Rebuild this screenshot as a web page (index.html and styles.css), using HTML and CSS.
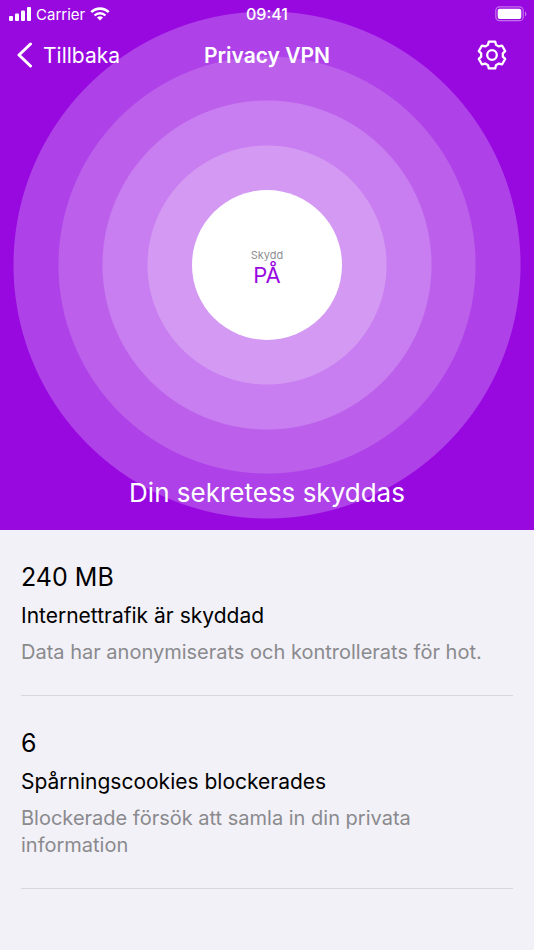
FILE: index.html
```html
<!DOCTYPE html>
<html lang="sv">
<head>
<meta charset="utf-8">
<meta name="viewport" content="width=device-width, initial-scale=1">
<title>Privacy VPN</title>
<link rel="stylesheet" href="styles.css">
</head>
<body>
<main class="screen">
  <section class="hero">
    <div class="status-bar">
      <div class="status-network">
        <svg width="22" height="14" viewBox="0 0 22 14" fill="#fff" aria-hidden="true">
          <rect x="0" y="9" width="4" height="5" rx="1"/>
          <rect x="6" y="6.500" width="4" height="7.500" rx="1"/>
          <rect x="12" y="3.500" width="4" height="10.500" rx="1"/>
          <rect x="18" y="0" width="4" height="14" rx="1"/>
        </svg>
        <span>Carrier</span>
        <svg width="20" height="14" viewBox="0 0 20 14" fill="none" stroke="#fff" aria-hidden="true">
          <path d="M1.300 5.100a12.600 12.600 0 0 1 17.400 0" stroke-width="2.600"/>
          <path d="M4.500 8.500a8 8 0 0 1 11 0" stroke-width="2.400"/>
          <path d="M10 13.600 6.900 10.600a4.600 4.600 0 0 1 6.200 0Z" fill="#fff" stroke="none"/>
        </svg>
      </div>
      <time class="status-time">09:41</time>
      <svg class="battery" width="32" height="16" viewBox="0 0 32 16" fill="none" aria-hidden="true">
        <rect x=".8" y=".8" width="27.400" height="13.900" rx="3.800" stroke="#fff" stroke-opacity=".42" stroke-width="1.200"/>
        <rect x="2.700" y="2.700" width="23.600" height="10.200" rx="2" fill="#fff"/>
        <path d="M30 5.400c1.800.7 1.800 4.100 0 4.800Z" fill="#fff" fill-opacity=".45"/>
      </svg>
    </div>
    <header class="nav">
      <a class="back" href="#">
        <svg width="16" height="26" viewBox="0 0 16 26" fill="none" stroke="#fff" stroke-width="3" stroke-linecap="round" stroke-linejoin="round" aria-hidden="true">
          <path d="M13.500 2 2 13 13.500 24"/>
        </svg>
        <span>Tillbaka</span>
      </a>
      <h1 class="nav-title">Privacy VPN</h1>
      <button class="settings" type="button" aria-label="Inställningar">
        <svg width="30" height="30" viewBox="-15 -15 30 30" fill="none" stroke="#fff" stroke-width="2.300" stroke-linejoin="round" aria-hidden="true">
          <path d="M-4-10.200-3.200-13.400H3.200L4-10.200 6.830-8.560 10-9.450 13.200-3.900 10.830-1.640V1.640L13.200 3.900 10 9.450 6.830 8.560 4 10.200 3.200 13.400H-3.200L-4 10.200-6.830 8.560-10 9.450-13.200 3.900-10.830 1.640V-1.640L-13.200-3.900-10-9.450-6.830-8.560Z"/>
          <circle r="4.800"/>
        </svg>
      </button>
    </header>
    <button class="shield" type="button">
      <span class="shield-label">Skydd</span>
      <span class="shield-state">PÅ</span>
    </button>
    <p class="headline">Din sekretess skyddas</p>
  </section>
  <section class="stats">
    <article class="stat">
      <p class="stat-value">240 MB</p>
      <h2 class="stat-title">Internettrafik är skyddad</h2>
      <p class="stat-text">Data har anonymiserats och kontrollerats för hot.</p>
    </article>
    <article class="stat">
      <p class="stat-value">6</p>
      <h2 class="stat-title">Spårningscookies blockerades</h2>
      <p class="stat-text">Blockerade försök att samla in din privata information</p>
    </article>
  </section>
</main>
</body>
</html>
```
FILE: styles.css
```css
* {
  box-sizing: border-box;
}

body {
  margin: 0;
  background: #f2f1f7;
  color: #000;
  font-family: Inter, "Liberation Sans", sans-serif;
}

h1, h2, p {
  margin: 0;
}

button {
  border: 0;
  padding: 0;
  background: none;
  font: inherit;
}

svg {
  display: block;
}

/* Concentric rings share their centre with the shield button. */
.hero {
  display: flex;
  flex-direction: column;
  align-items: center;
  background: radial-gradient(
    circle at 50% 265px,
    #d49af3 119px,
    #c87df0 120px 164px,
    #bc60ec 165px 208px,
    #ae41e8 209px 253px,
    #9809e0 254px
  );
  color: #fff;
}

.status-bar,
.nav {
  display: grid;
  grid-template-columns: 1fr auto 1fr;
  align-items: center;
  width: 100%;
}

.status-bar {
  height: 28px;
  padding: 0 7px;
  font-size: 15px;
}

.status-network {
  display: flex;
  align-items: center;
  gap: 5px;
  padding-left: 2px;
}

.status-time {
  font-size: 16px;
  font-weight: 500;
}

.battery {
  justify-self: end;
}

.nav {
  height: 54px;
  padding: 0 17px;
  font-size: 21px;
}

.back {
  display: flex;
  align-items: center;
  gap: 10px;
  color: #fff;
  text-decoration: none;
}

.nav-title {
  font-size: 21px;
  font-weight: 600;
}

.settings {
  justify-self: end;
  padding-right: 10px;
}

.shield {
  display: flex;
  flex-direction: column;
  align-items: center;
  justify-content: center;
  width: 150px;
  height: 150px;
  margin-top: 108px;
  padding-top: 6px;
  border-radius: 50%;
  background: #fff;
}

.shield-label {
  color: #8e8e93;
  font-size: 11px;
  line-height: 14px;
}

.shield-state {
  color: #9809e0;
  font-size: 22px;
  line-height: 26px;
}

.headline {
  padding: 136px 16px 20px;
  font-size: 26px;
  line-height: 34px;
  text-align: center;
}

.stats {
  padding: 0 21px;
}

.stat {
  padding: 30px 0 29px;
  border-bottom: 1px solid #d8d7dc;
}

.stat-value {
  font-size: 25px;
  line-height: 34px;
}

.stat-title {
  margin: 8px 0 9px;
  font-size: 21px;
  font-weight: 400;
  line-height: 28px;
}

.stat-text {
  color: #8a8a8e;
  font-size: 20px;
  line-height: 27px;
}
```
